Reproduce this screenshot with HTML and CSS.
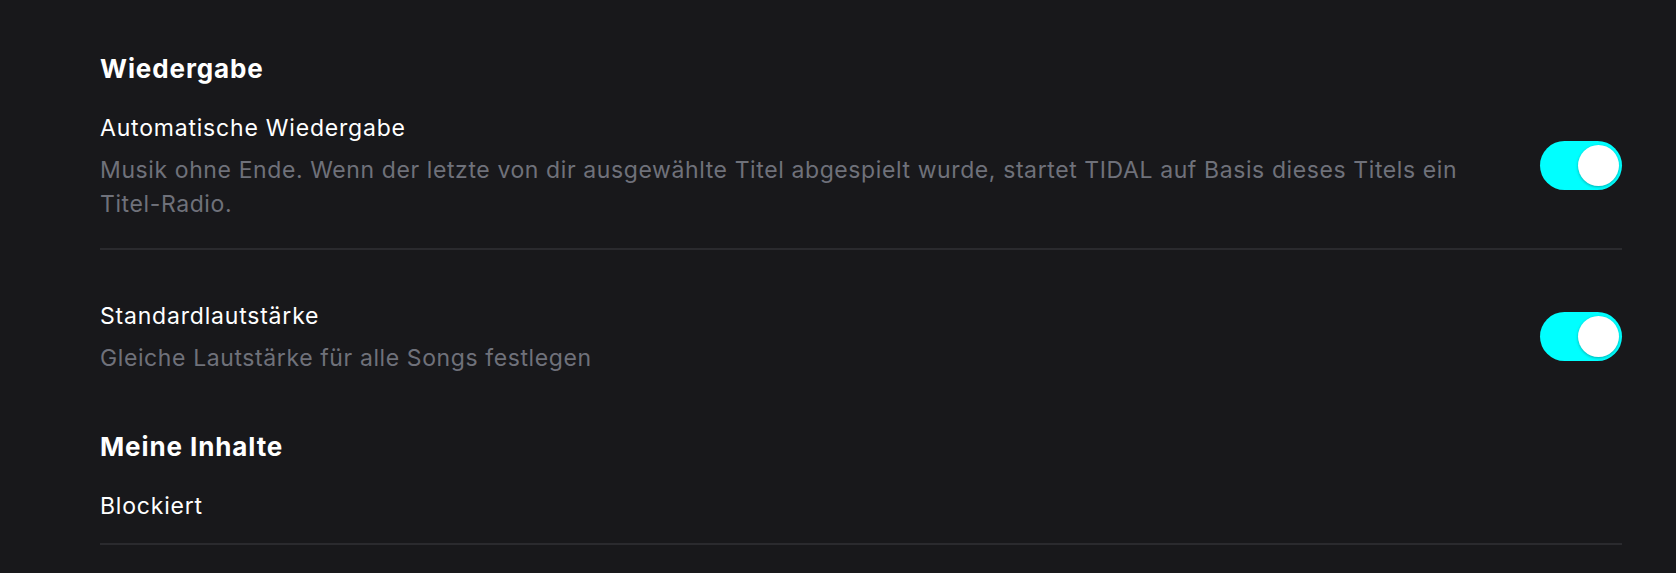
FILE: index.html
```html
<!DOCTYPE html>
<html lang="de">
<head>
    <meta charset="UTF-8">
    <meta name="viewport" content="width=device-width, initial-scale=1.0">
    <title>Einstellungen</title>
    <link rel="stylesheet" href="styles.css">
</head>
<body>
    <div class="settings">
        <h2 class="section-title">Wiedergabe</h2>

        <div class="setting-row first">
            <div class="setting-text">
                <div class="setting-name">Automatische Wiedergabe</div>
                <div class="setting-desc">Musik ohne Ende. Wenn der letzte von dir ausgewählte Titel abgespielt wurde, startet TIDAL auf Basis dieses Titels ein Titel-Radio.</div>
            </div>
            <span class="toggle on"><span class="knob"></span></span>
        </div>

        <div class="setting-row second">
            <div class="setting-text">
                <div class="setting-name">Standardlautstärke</div>
                <div class="setting-desc">Gleiche Lautstärke für alle Songs festlegen</div>
            </div>
            <span class="toggle on"><span class="knob"></span></span>
        </div>

        <h2 class="section-title content">Meine Inhalte</h2>

        <div class="setting-row link">
            <div class="setting-name">Blockiert</div>
        </div>
    </div>
</body>
</html>
```

FILE: styles.css
```css
body {
    margin: 0;
    background-color: #18181b;
    font-family: Inter, "Open Sans", sans-serif;
    color: #ffffff;
}
.settings {
    padding: 53px 54px 0 100px;
}
.section-title {
    margin: 0;
    font-size: 26px;
    line-height: 32px;
    font-weight: 700;
    letter-spacing: 0.9px;
}
.section-title.content {
    margin-top: 56px;
}
.setting-row {
    display: flex;
    align-items: center;
    justify-content: space-between;
    gap: 40px;
}
.setting-row.first {
    margin-top: 29px;
    padding-bottom: 27px;
    border-bottom: 2px solid #2a2a2e;
}
.setting-row.second {
    margin-top: 52px;
}
.setting-row.link {
    margin-top: 29px;
    padding-bottom: 23px;
    border-bottom: 2px solid #2a2a2e;
}
.setting-name {
    font-size: 23px;
    line-height: 28px;
    letter-spacing: 0.8px;
}
.setting-desc {
    margin-top: 11px;
    font-size: 23px;
    line-height: 34px;
    letter-spacing: 0.6px;
    color: #6f717a;
}
.toggle {
    flex-shrink: 0;
    position: relative;
    width: 82px;
    height: 49px;
    margin-bottom: 5px;
    border-radius: 25px;
    background: #00ffff;
}
.knob {
    position: absolute;
    top: 4px;
    right: 3px;
    width: 41px;
    height: 41px;
    border-radius: 50%;
    background: #ffffff;
    box-shadow: 0 1px 3px rgba(0, 0, 0, 0.3);
}
```
